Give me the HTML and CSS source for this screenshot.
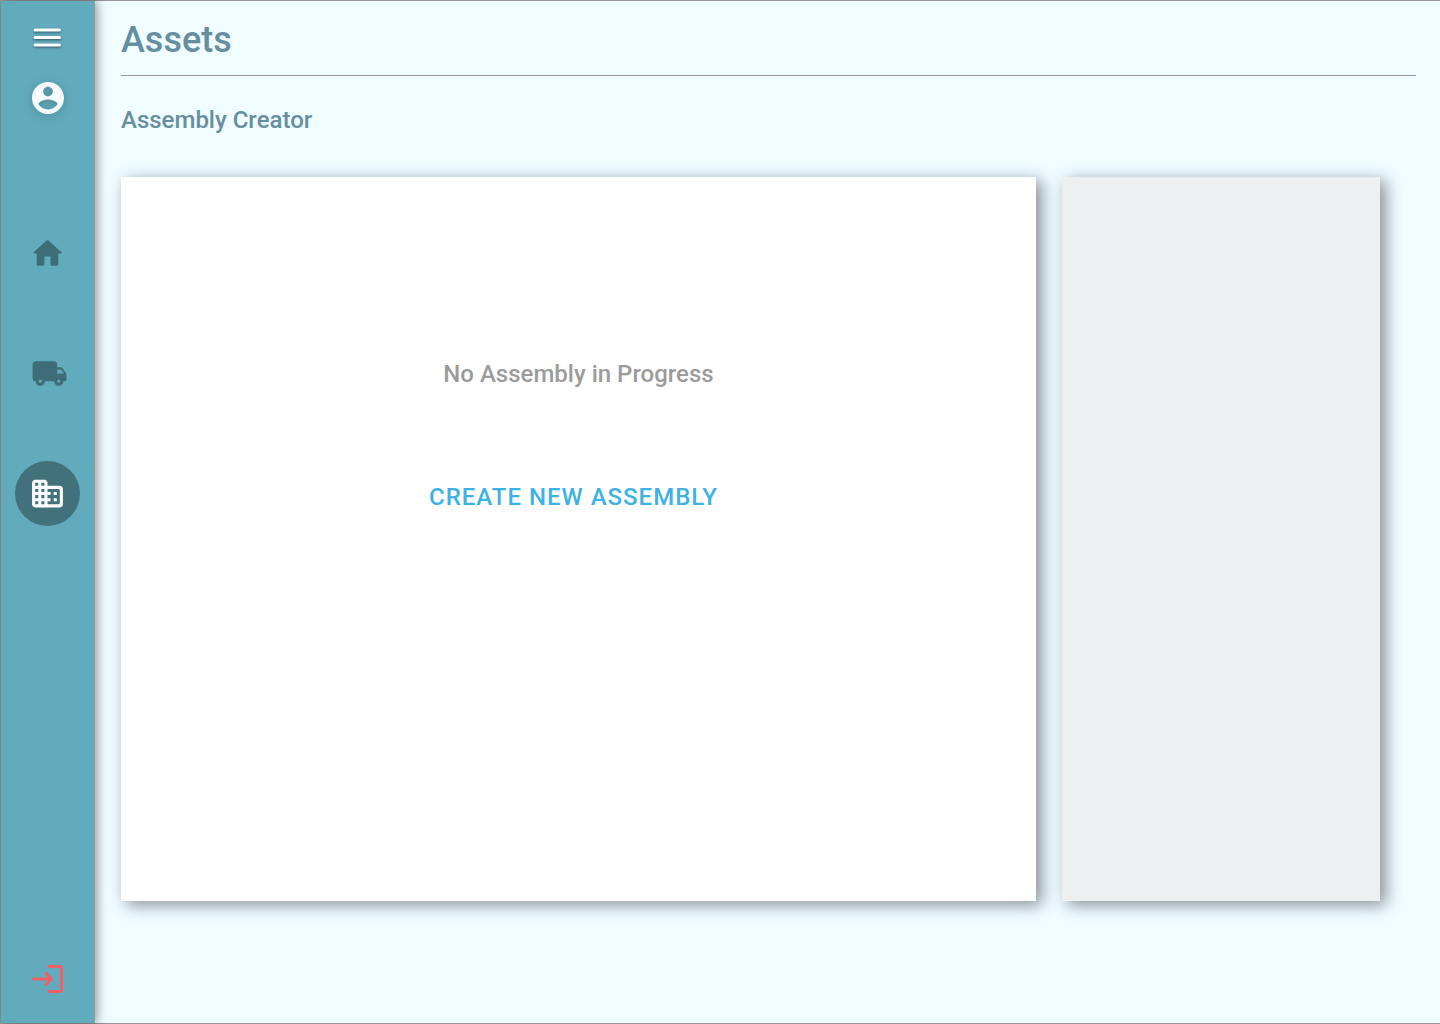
FILE: index.html
```html
<!DOCTYPE html>
<html lang="en">
<head>
<meta charset="utf-8">
<meta name="viewport" content="width=device-width, initial-scale=1">
<title>Assets</title>
<link rel="stylesheet" href="styles.css">
</head>
<body>
<div class="app">
  <aside class="sidebar">
    <button class="icon-button menu-button" type="button" aria-label="Menu">
      <svg width="29" height="20" viewBox="0 0 29 20" stroke="currentColor" stroke-width="3" stroke-linecap="round"><path d="M2 2H26.500M2 9.500H26.500M2 17H26.500"/></svg>
    </button>
    <button class="icon-button account-button" type="button" aria-label="Account">
      <svg width="32" height="32" viewBox="2 2 20 20" fill="currentColor"><path d="M12 2C6.480 2 2 6.480 2 12s4.480 10 10 10 10-4.480 10-10S17.520 2 12 2zm0 3c1.660 0 3 1.340 3 3s-1.340 3-3 3-3-1.340-3-3 1.340-3 3-3zm0 14.200c-2.500 0-4.710-1.280-6-3.220.03-1.990 4-3.080 6-3.080 1.990 0 5.970 1.090 6 3.080-1.290 1.940-3.500 3.220-6 3.220z"/></svg>
    </button>
    <nav class="nav">
      <a class="nav-link" href="#home" aria-label="Home">
        <svg width="37" height="37" viewBox="0 0 24 24" fill="currentColor"><path d="M10 19v-5h4v5c0 .55.45 1 1 1h3c.55 0 1-.45 1-1v-7h1.700c.46 0 .68-.57.33-.87L12.670 3.600c-.38-.34-.96-.34-1.340 0l-8.360 7.530c-.34.3-.13.87.33.87H5v7c0 .55.45 1 1 1h3c.55 0 1-.45 1-1z"/></svg>
      </a>
      <a class="nav-link" href="#deliveries" aria-label="Deliveries">
        <svg class="truck" width="37" height="37" viewBox="0 0 24 24" fill="currentColor"><path d="M19.500 8H17V6c0-1.100-.9-2-2-2H3c-1.100 0-2 .9-2 2v9c0 1.100.9 2 2 2 0 1.660 1.340 3 3 3s3-1.340 3-3h6c0 1.660 1.340 3 3 3s3-1.340 3-3h1c.55 0 1-.45 1-1v-3.330c0-.43-.14-.85-.4-1.200L20.300 8.400c-.19-.25-.49-.4-.8-.4zM6 18c-.55 0-1-.45-1-1s.45-1 1-1 1 .45 1 1-.45 1-1 1zm13.500-8.500l1.960 2.500H17V9.500h2.500zM18 18c-.55 0-1-.45-1-1s.45-1 1-1 1 .45 1 1-.45 1-1 1z"/></svg>
      </a>
      <a class="nav-link nav-link-active" href="#assets" aria-label="Assets" aria-current="page">
        <svg width="37" height="37" viewBox="0 0 24 24" fill="currentColor"><path d="M12 7V5c0-1.100-.9-2-2-2H4c-1.100 0-2 .9-2 2v14c0 1.100.9 2 2 2h16c1.100 0 2-.9 2-2V9c0-1.100-.9-2-2-2h-8zM6 19H4v-2h2v2zm0-4H4v-2h2v2zm0-4H4V9h2v2zm0-4H4V5h2v2zm4 12H8v-2h2v2zm0-4H8v-2h2v2zm0-4H8V9h2v2zm0-4H8V5h2v2zm9 12h-7v-2h2v-2h-2v-2h2v-2h-2V9h7c.55 0 1 .45 1 1v8c0 .55-.45 1-1 1zm-1-8h-2v2h2v-2zm0 4h-2v2h2v-2z"/></svg>
      </a>
    </nav>
    <button class="icon-button exit-button" type="button" aria-label="Sign out">
      <svg width="32" height="28" viewBox="0 0 32 28" fill="none" stroke="currentColor" stroke-width="3" stroke-linecap="round" stroke-linejoin="round"><path d="M17 1.500H28Q29.500 1.500 29.500 3V25Q29.500 26.500 28 26.500H17M1.500 14H19M14 8.500L19.500 14L14 19.500"/></svg>
    </button>
  </aside>
  <main class="content">
    <header class="page-header"><h1 class="page-title">Assets</h1></header>
    <h2 class="section-title">Assembly Creator</h2>
    <div class="panels">
      <section class="panel workspace">
        <p class="empty-text">No Assembly in Progress</p>
        <button class="create-button" type="button">CREATE NEW ASSEMBLY</button>
      </section>
      <aside class="panel details" aria-label="Assembly details"></aside>
    </div>
  </main>
</div>
</body>
</html>
```
FILE: styles.css
```css
* {
  box-sizing: border-box;
}

body {
  margin: 0;
  font-family: Roboto, "Liberation Sans", sans-serif;
  font-weight: 500;
  background: #f0fcff;
}

h1, h2, p {
  margin: 0;
  font-weight: 500;
}

svg {
  display: block;
}

.app {
  display: flex;
  min-height: 100vh;
  border: 1px solid #979797;
  border-right: 0;
}

.sidebar {
  display: flex;
  flex-direction: column;
  align-items: center;
  flex: 0 0 94px;
  padding: 27px 0 30px;
  background: #61abbc;
  border-right: 1px solid #979797;
  box-shadow: 2px 0 10px rgba(0, 0, 0, 0.4);
}

.icon-button {
  padding: 0;
  border: 0;
  background: none;
  cursor: pointer;
}

.menu-button {
  color: #fff;
  filter: drop-shadow(0 1px 1px rgba(0, 0, 0, 0.5));
}

.account-button {
  margin-top: 34px;
  color: #f7fbfc;
  filter: drop-shadow(0 2px 4px rgba(0, 0, 0, 0.2));
}

.nav {
  display: flex;
  flex-direction: column;
  gap: 55px;
  margin-top: 107px;
}

.nav-link {
  display: flex;
  align-items: center;
  justify-content: center;
  width: 65px;
  height: 65px;
  border-radius: 50%;
  color: #3e6d78;
}

.truck {
  margin-left: 3px;
}

.nav-link-active {
  background: #42717c;
  color: #fff;
}

.exit-button {
  margin-top: auto;
  color: #f06065;
}

.content {
  flex: 1;
  min-width: 0;
  padding: 0 24px 122px 26px;
  display: flex;
  flex-direction: column;
}

.page-header {
  height: 75px;
  padding-top: 18px;
  border-bottom: 1px solid #979797;
}

.page-title {
  font-size: 36px;
  line-height: 42px;
  color: #658fa0;
}

.section-title {
  margin-top: 30px;
  font-size: 24px;
  line-height: 28px;
  color: #658fa0;
}

.panels {
  display: flex;
  flex: 1;
  gap: 26px;
  margin: 43px 36px 0 0;
}

.panel {
  box-shadow: 6px 4px 15px rgba(0, 0, 0, 0.4), 0 2px 16px rgba(120, 160, 230, 0.12);
}

.workspace {
  display: flex;
  flex: 915;
  flex-direction: column;
  align-items: center;
  padding-top: 183px;
  background: #fff;
}

.details {
  flex: 318;
  background: #ecf0f1;
}

.empty-text {
  font-size: 24px;
  line-height: 28px;
  color: #9b9b9b;
}

.create-button {
  margin: 87px 10px 0 0;
  padding: 8px 0;
  border: 0;
  background: none;
  font: inherit;
  font-size: 24px;
  line-height: 28px;
  letter-spacing: 1px;
  color: #3eb1e5;
  cursor: pointer;
}
```
